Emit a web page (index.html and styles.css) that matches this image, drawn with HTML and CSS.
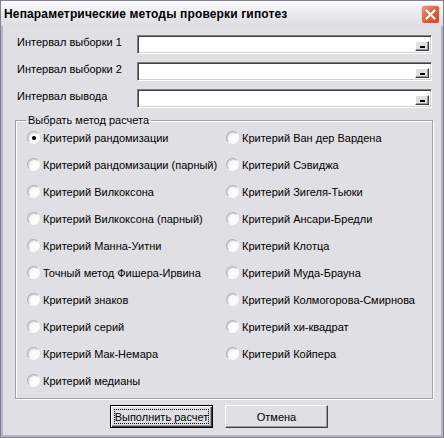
FILE: index.html
```html
<!DOCTYPE html>
<html lang="ru">
<head>
<meta charset="utf-8">
<title>Непараметрические методы проверки гипотез</title>
<link rel="stylesheet" href="styles.css">
</head>
<body>
<div class="window">
  <div class="titlebar">
    <span class="title">Непараметрические методы проверки гипотез</span>
    <span class="close">
      <svg width="11" height="11" viewBox="0 0 11 11"><path d="M1.5 1.5 L9.5 9.5 M9.5 1.5 L1.5 9.5" stroke="#fff" stroke-width="2" stroke-linecap="square"/></svg>
    </span>
  </div>
  <div class="body">
    <div class="fields">
      <div class="field-row">
        <span class="label">Интервал выборки 1</span>
        <div class="refedit"><span class="ref-btn"><span class="dash"></span></span></div>
      </div>
      <div class="field-row">
        <span class="label">Интервал выборки 2</span>
        <div class="refedit"><span class="ref-btn"><span class="dash"></span></span></div>
      </div>
      <div class="field-row">
        <span class="label">Интервал вывода</span>
        <div class="refedit"><span class="ref-btn"><span class="dash"></span></span></div>
      </div>
    </div>
    <fieldset class="group">
      <legend>Выбрать метод расчета</legend>
      <div class="options">
        <label class="opt"><span class="radio checked"></span>Критерий рандомизации</label>
        <label class="opt"><span class="radio"></span>Критерий рандомизации (парный)</label>
        <label class="opt"><span class="radio"></span>Критерий Вилкоксона</label>
        <label class="opt"><span class="radio"></span>Критерий Вилкоксона (парный)</label>
        <label class="opt"><span class="radio"></span>Критерий Манна-Уитни</label>
        <label class="opt"><span class="radio"></span>Точный метод Фишера-Ирвина</label>
        <label class="opt"><span class="radio"></span>Критерий знаков</label>
        <label class="opt"><span class="radio"></span>Критерий серий</label>
        <label class="opt"><span class="radio"></span>Критерий Мак-Немара</label>
        <label class="opt"><span class="radio"></span>Критерий медианы</label>
        <label class="opt"><span class="radio"></span>Критерий Ван дер Вардена</label>
        <label class="opt"><span class="radio"></span>Критерий Сэвиджа</label>
        <label class="opt"><span class="radio"></span>Критерий Зигеля-Тьюки</label>
        <label class="opt"><span class="radio"></span>Критерий Ансари-Бредли</label>
        <label class="opt"><span class="radio"></span>Критерий Клотца</label>
        <label class="opt"><span class="radio"></span>Критерий Муда-Брауна</label>
        <label class="opt"><span class="radio"></span>Критерий Колмогорова-Смирнова</label>
        <label class="opt"><span class="radio"></span>Критерий хи-квадрат</label>
        <label class="opt"><span class="radio"></span>Критерий Койпера</label>
      </div>
    </fieldset>
    <div class="buttons">
      <span class="btn default"><span class="focus">Выполнить расчет</span></span>
      <span class="btn">Отмена</span>
    </div>
  </div>
</div>
</body>
</html>
```
FILE: styles.css
```css
* { box-sizing: border-box; }
html, body { margin: 0; padding: 0; background: #e0dfe3; }
body {
  font-family: "Liberation Sans", Arial, sans-serif;
  font-size: 11px;
  color: #000;
}
.window {
  width: 444px;
  height: 438px;
  border: 1px solid #808092;
  display: flex;
  flex-direction: column;
  background: #e0dfe3;
}
.titlebar {
  height: 25px;
  flex: none;
  display: flex;
  align-items: center;
  justify-content: space-between;
  padding: 0 3px 0 3px;
  background: linear-gradient(#fcfcfd 0%, #ececf0 45%, #dcdce2 100%);
}
.title {
  font-weight: bold;
  font-size: 12px;
  letter-spacing: 0.15px;
  color: #000;
}
.close {
  width: 19px;
  height: 19px;
  border: 1px solid #f4d8d0;
  border-radius: 3px;
  background: linear-gradient(135deg, #ec9a84 0%, #de6448 45%, #c84a30 100%);
  display: flex;
  align-items: center;
  justify-content: center;
  margin-top: 2px;
}
.body {
  flex: 1;
  display: flex;
  flex-direction: column;
  border-left: 2px solid #b4b4c2;
  border-right: 2px solid #b4b4c2;
  border-bottom: 2px solid #b4b4c2;
  padding: 9px 9px 0 14px;
}
.fields {
  display: flex;
  flex-direction: column;
  gap: 8px;
}
.field-row {
  display: flex;
  align-items: flex-start;
}
.label {
  width: 120px;
  line-height: 14px;
  flex: none;
}
.refedit {
  flex: 1;
  height: 19px;
  background: #fff;
  border-top: 1px solid #808080;
  border-left: 1px solid #808080;
  border-right: 1px solid #fff;
  border-bottom: 1px solid #fff;
  box-shadow: inset 1px 1px 0 #404040, inset -1px -1px 0 #d4d0c8;
  display: flex;
  align-items: flex-end;
  justify-content: flex-end;
  padding: 0 2px 2px 0;
}
.ref-btn {
  width: 14px;
  height: 10px;
  background: #e0dfe3;
  border-top: 1px solid #fff;
  border-left: 1px solid #fff;
  border-right: 1px solid #404040;
  border-bottom: 1px solid #404040;
  box-shadow: inset -1px -1px 0 #9d9da1;
  display: flex;
  align-items: flex-end;
  justify-content: center;
  padding-bottom: 2px;
}
.dash {
  width: 5px;
  height: 2px;
  background: #000;
}
.group {
  margin: 5px 0 0 -2px;
  padding: 0 0 0 11px;
  width: 418px;
  height: 286px;
  border: 1px solid #a0a0a8;
  box-shadow: 1px 1px 0 #fff, inset 1px 1px 0 #fff;
}
.group legend {
  padding: 0 2px;
  margin-left: -1px;
  line-height: 14px;
}
.options {
  display: grid;
  grid-template-columns: 199px 1fr;
  grid-template-rows: repeat(10, 27px);
  grid-auto-flow: column;
  margin-top: -3px;
}
.opt {
  display: flex;
  align-items: center;
  gap: 3px;
  line-height: 14px;
}
.radio {
  width: 13px;
  height: 13px;
  flex: none;
  border-radius: 50%;
  border: 1px solid;
  border-color: #b0b0b6 #fafafa #fafafa #b0b0b6;
  background: radial-gradient(circle at 65% 65%, #ffffff 0%, #f6f6f6 60%, #e6e6ea 100%);
  box-shadow: inset 1px 1px 0 #d4d4d8;
  display: flex;
  align-items: center;
  justify-content: center;
}
.radio.checked::after {
  content: "";
  width: 4px;
  height: 4px;
  border-radius: 50%;
  background: #000;
}
.buttons {
  display: flex;
  justify-content: center;
  gap: 12px;
  margin-top: 6px;
  margin-left: -11px;
}
.btn {
  width: 103px;
  height: 23px;
  display: flex;
  align-items: center;
  justify-content: center;
  background: #e0dfe3;
  border-top: 1px solid #fff;
  border-left: 1px solid #fff;
  border-right: 1px solid #404040;
  border-bottom: 1px solid #404040;
  box-shadow: inset -1px -1px 0 #9d9da1;
}
.btn.default {
  border: 1px solid #000;
  box-shadow: inset 1px 1px 0 #fff, inset -1px -1px 0 #404040, inset -2px -2px 0 #9d9da1;
  padding: 3px;
}
.focus {
  width: 100%;
  height: 100%;
  display: flex;
  align-items: center;
  justify-content: center;
  outline: 1px dotted #000;
  outline-offset: -1px;
}
```
